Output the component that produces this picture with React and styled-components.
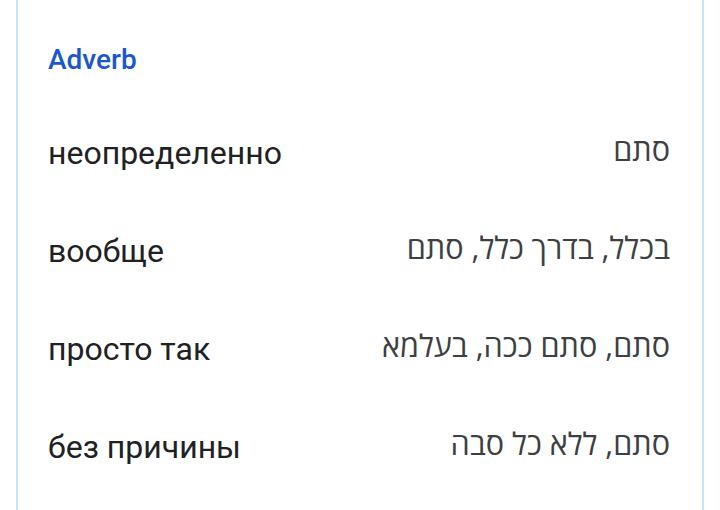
import React from "react";
import styled, { createGlobalStyle } from "styled-components";

const GlobalStyle = createGlobalStyle`
  html, body {
    margin: 0;
    padding: 0;
    background: #ffffff;
  }
`;

const Page = styled.div`
  padding: 0 16px;
  height: 510px;
  overflow: hidden;
`;

const Card = styled.section`
  height: 100%;
  box-sizing: border-box;
  border-left: 2px solid #cbe4f3;
  border-right: 2px solid #cbe4f3;
  background: #ffffff;
  padding: 42px 32px 0 30px;
`;

const PartOfSpeech = styled.h3`
  margin: 0 0 26px;
  font-family: Roboto, "Noto Sans", sans-serif;
  font-weight: 500;
  font-size: 28px;
  line-height: 36px;
  color: #1a58cc;
`;

const Row = styled.div`
  display: flex;
  justify-content: space-between;
  align-items: center;
  height: 98px;
`;

const Word = styled.span`
  font-family: Roboto, "Liberation Sans", sans-serif;
  font-size: 32px;
  color: #202124;
`;

const Translations = styled.span`
  font-family: "Open Sans", "Liberation Sans", sans-serif;
  font-size: 30.6px;
  color: #3c4043;
  direction: rtl;
  padding: 0 0 8px;
`;

const entries = [
  { word: "неопределенно", tr: "סתם" },
  { word: "вообще", tr: "בכלל, בדרך כלל, סתם" },
  { word: "просто так", tr: "סתם, סתם ככה, בעלמא" },
  { word: "без причины", tr: "סתם, ללא כל סבה" },
];

const App = () => {
  return (
    <Page>
      <GlobalStyle />
      <Card>
        <PartOfSpeech>Adverb</PartOfSpeech>
        {entries.map((e, i) => (
          <Row key={i}>
            <Word>{e.word}</Word>
            <Translations>{e.tr}</Translations>
          </Row>
        ))}
      </Card>
    </Page>
  );
};

export default App;
